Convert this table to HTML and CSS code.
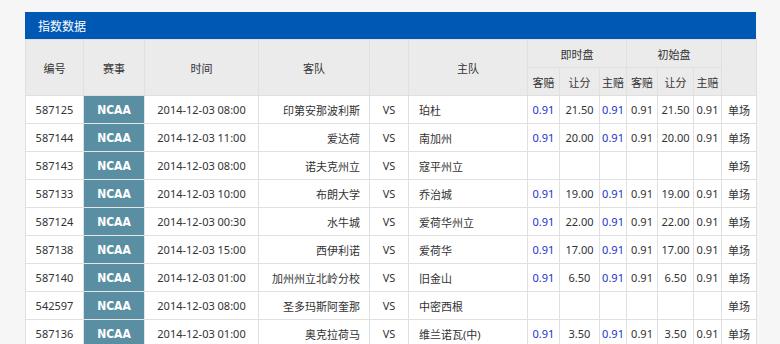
FILE: index.html
```html
<!DOCTYPE html>
<html lang="zh">
<head>
<meta charset="utf-8">
<title>指数数据</title>
<link rel="stylesheet" href="styles.css">
</head>
<body>
<div class="panel">
  <div class="panel-title">指数数据</div>
  <table class="odds">
    <colgroup>
      <col class="c-id"><col class="c-league"><col class="c-time"><col class="c-away"><col class="c-vs"><col class="c-home">
      <col class="c-o1"><col class="c-o2"><col class="c-o3"><col class="c-o4"><col class="c-o5"><col class="c-o6"><col class="c-type">
    </colgroup>
    <thead>
      <tr>
        <th rowspan="2">编号</th>
        <th rowspan="2">赛事</th>
        <th rowspan="2">时间</th>
        <th rowspan="2">客队</th>
        <th rowspan="2"></th>
        <th rowspan="2">主队</th>
        <th colspan="3">即时盘</th>
        <th colspan="3">初始盘</th>
        <th rowspan="2"></th>
      </tr>
      <tr>
        <th>客赔</th><th>让分</th><th>主赔</th>
        <th>客赔</th><th>让分</th><th>主赔</th>
      </tr>
    </thead>
    <tbody>
      <tr><td>587125</td><td class="league">NCAA</td><td>2014-12-03 08:00</td><td class="away">印第安那波利斯</td><td>VS</td><td class="home">珀杜</td><td class="blue">0.91</td><td>21.50</td><td class="blue">0.91</td><td>0.91</td><td>21.50</td><td>0.91</td><td>单场</td></tr>
      <tr><td>587144</td><td class="league">NCAA</td><td>2014-12-03 11:00</td><td class="away">爱达荷</td><td>VS</td><td class="home">南加州</td><td class="blue">0.91</td><td>20.00</td><td class="blue">0.91</td><td>0.91</td><td>20.00</td><td>0.91</td><td>单场</td></tr>
      <tr><td>587143</td><td class="league">NCAA</td><td>2014-12-03 08:00</td><td class="away">诺夫克州立</td><td>VS</td><td class="home">寇平州立</td><td></td><td></td><td></td><td></td><td></td><td></td><td>单场</td></tr>
      <tr><td>587133</td><td class="league">NCAA</td><td>2014-12-03 10:00</td><td class="away">布朗大学</td><td>VS</td><td class="home">乔治城</td><td class="blue">0.91</td><td>19.00</td><td class="blue">0.91</td><td>0.91</td><td>19.00</td><td>0.91</td><td>单场</td></tr>
      <tr><td>587124</td><td class="league">NCAA</td><td>2014-12-03 00:30</td><td class="away">水牛城</td><td>VS</td><td class="home">爱荷华州立</td><td class="blue">0.91</td><td>22.00</td><td class="blue">0.91</td><td>0.91</td><td>22.00</td><td>0.91</td><td>单场</td></tr>
      <tr><td>587138</td><td class="league">NCAA</td><td>2014-12-03 15:00</td><td class="away">西伊利诺</td><td>VS</td><td class="home">爱荷华</td><td class="blue">0.91</td><td>17.00</td><td class="blue">0.91</td><td>0.91</td><td>17.00</td><td>0.91</td><td>单场</td></tr>
      <tr><td>587140</td><td class="league">NCAA</td><td>2014-12-03 01:00</td><td class="away">加州州立北岭分校</td><td>VS</td><td class="home">旧金山</td><td class="blue">0.91</td><td>6.50</td><td class="blue">0.91</td><td>0.91</td><td>6.50</td><td>0.91</td><td>单场</td></tr>
      <tr><td>542597</td><td class="league">NCAA</td><td>2014-12-03 08:00</td><td class="away">圣多玛斯阿奎那</td><td>VS</td><td class="home">中密西根</td><td></td><td></td><td></td><td></td><td></td><td></td><td>单场</td></tr>
      <tr><td>587136</td><td class="league">NCAA</td><td>2014-12-03 01:00</td><td class="away">奥克拉荷马</td><td>VS</td><td class="home">维兰诺瓦(中)</td><td class="blue">0.91</td><td>3.50</td><td class="blue">0.91</td><td>0.91</td><td>3.50</td><td>0.91</td><td>单场</td></tr>
    </tbody>
  </table>
</div>
</body>
</html>
```

FILE: styles.css
```css
html, body {
  margin: 0;
  padding: 0;
  background: #f6f6f6;
}
body {
  font-family: "Noto Sans", "Noto Sans CJK SC", sans-serif;
  font-size: 11px;
  color: #333;
}
.panel {
  width: 731px;
  margin: 12px 0 0 25px;
  background: #fff;
}
.panel-title {
  height: 27px;
  line-height: 27px;
  background: #0058b5;
  color: #fff;
  padding-left: 13px;
  font-size: 12px;
  font-family: "Noto Sans CJK SC", sans-serif;
}
.odds {
  width: 731px;
  table-layout: fixed;
  border-collapse: collapse;
}
.c-id { width: 58px; }
.c-league { width: 61px; }
.c-time { width: 114px; }
.c-away { width: 111px; }
.c-vs { width: 39px; }
.c-home { width: 119px; }
.c-o1 { width: 32px; }
.c-o2 { width: 40px; }
.c-o3 { width: 27px; }
.c-o4 { width: 31px; }
.c-o5 { width: 36px; }
.c-o6 { width: 28px; }
.c-type { width: 35px; }
.odds th, .odds td {
  border: 1px solid #e0e0e0;
  padding: 0;
  text-align: center;
  white-space: nowrap;
  overflow: hidden;
}
.odds th {
  background: #ebebeb;
  font-weight: normal;
  height: 27px;
  font-family: "Noto Sans CJK SC", sans-serif;
  color: #333;
}
.odds td {
  height: 27px;
}
.odds td.league {
  background: #5a8fa3;
  color: #fff;
  font-weight: bold;
  font-size: 12px;
  font-family: "Liberation Sans Narrow", "DejaVu Sans Condensed", sans-serif;
  border-color: #e6e6e6;
}
.odds td.away {
  text-align: right;
  padding-right: 9px;
}
.odds td.home {
  text-align: left;
  padding-left: 10px;
}
.odds td.blue {
  color: #2233cc;
}
```
